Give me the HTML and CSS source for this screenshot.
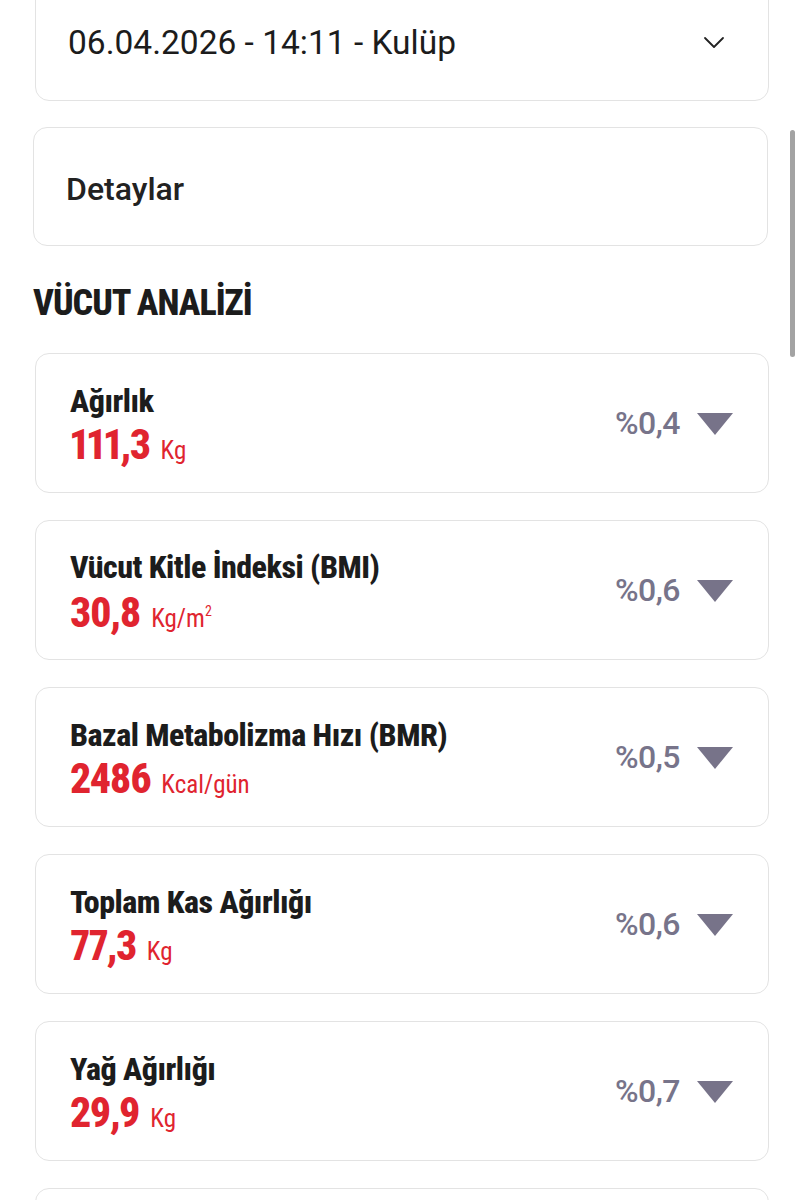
FILE: index.html
```html
<!DOCTYPE html>
<html lang="tr">
<head>
    <meta charset="UTF-8">
    <meta name="viewport" content="width=device-width, initial-scale=1.0">
    <title>Vücut Analizi</title>
    <link rel="stylesheet" href="styles.css">
</head>
<body>
    <div class="page">
        <div class="box select-box">
            <span class="select-text">06.04.2026 - 14:11 - Kulüp</span>
            <svg class="chevron" width="22" height="13" viewBox="0 0 22 13">
                <polyline points="2,2 11,11 20,2" fill="none" stroke="#222" stroke-width="1.8" stroke-linecap="round" stroke-linejoin="round"/>
            </svg>
        </div>

        <div class="box details-box">Detaylar</div>

        <h2 class="section-title">VÜCUT ANALİZİ</h2>

        <div class="metric-list">
            <div class="box metric">
                <div class="metric-info">
                    <div class="metric-name">Ağırlık</div>
                    <div class="metric-value">111,3 <span class="unit">Kg</span></div>
                </div>
                <div class="metric-change">
                    <span class="percent">%0,4</span>
                    <svg class="arrow" width="36" height="22" viewBox="0 0 36 22"><polygon points="0,0 36,0 18,22" fill="#777389"/></svg>
                </div>
            </div>
            <div class="box metric">
                <div class="metric-info">
                    <div class="metric-name">Vücut Kitle İndeksi (BMI)</div>
                    <div class="metric-value">30,8 <span class="unit">Kg/m<sup>2</sup></span></div>
                </div>
                <div class="metric-change">
                    <span class="percent">%0,6</span>
                    <svg class="arrow" width="36" height="22" viewBox="0 0 36 22"><polygon points="0,0 36,0 18,22" fill="#777389"/></svg>
                </div>
            </div>
            <div class="box metric">
                <div class="metric-info">
                    <div class="metric-name">Bazal Metabolizma Hızı (BMR)</div>
                    <div class="metric-value">2486 <span class="unit">Kcal/gün</span></div>
                </div>
                <div class="metric-change">
                    <span class="percent">%0,5</span>
                    <svg class="arrow" width="36" height="22" viewBox="0 0 36 22"><polygon points="0,0 36,0 18,22" fill="#777389"/></svg>
                </div>
            </div>
            <div class="box metric">
                <div class="metric-info">
                    <div class="metric-name">Toplam Kas Ağırlığı</div>
                    <div class="metric-value">77,3 <span class="unit">Kg</span></div>
                </div>
                <div class="metric-change">
                    <span class="percent">%0,6</span>
                    <svg class="arrow" width="36" height="22" viewBox="0 0 36 22"><polygon points="0,0 36,0 18,22" fill="#777389"/></svg>
                </div>
            </div>
            <div class="box metric">
                <div class="metric-info">
                    <div class="metric-name">Yağ Ağırlığı</div>
                    <div class="metric-value">29,9 <span class="unit">Kg</span></div>
                </div>
                <div class="metric-change">
                    <span class="percent">%0,7</span>
                    <svg class="arrow" width="36" height="22" viewBox="0 0 36 22"><polygon points="0,0 36,0 18,22" fill="#777389"/></svg>
                </div>
            </div>
            <div class="box metric"></div>
        </div>
    </div>

    <div class="scrollbar"></div>
</body>
</html>
```
FILE: styles.css
```css
body {
    margin: 0;
    background-color: #fff;
    font-family: Roboto, "Noto Sans", sans-serif;
    color: #1c1c1c;
    overflow: hidden;
}
.page {
    padding: 0 32px 0 35px;
}
.box {
    box-sizing: border-box;
    background-color: #fff;
    border: 1.5px solid #e3e3e3;
    border-radius: 14px;
}
.select-box {
    height: 119px;
    margin-top: -18px;
    padding: 0 43px 0 32px;
    display: flex;
    align-items: center;
    justify-content: space-between;
}
.select-text {
    font-size: 33.5px;
    padding-top: 2px;
}
.chevron {
    margin-top: 2px;
}
.details-box {
    height: 119px;
    margin: 26px 1px 0 -2px;
    padding: 4px 32px 0;
    display: flex;
    align-items: center;
    font-size: 32px;
    font-weight: 500;
    color: #222;
}
.section-title {
    margin: 37px 0 30px -2px;
    font-family: "Roboto Condensed", Roboto, sans-serif;
    font-stretch: condensed;
    font-weight: 800;
    font-size: 36px;
    line-height: 40px;
    letter-spacing: -1px;
}
.metric-list {
    display: flex;
    flex-direction: column;
    gap: 27px;
}
.metric {
    height: 140px;
    padding: 10px 35px 0 34px;
    display: flex;
    align-items: center;
    justify-content: space-between;
    font-family: "Roboto Condensed", Roboto, sans-serif;
    font-stretch: condensed;
}
.metric-name {
    font-size: 32px;
    line-height: 40px;
    font-weight: 800;
    letter-spacing: -0.5px;
}
.metric-value {
    margin-top: 0;
    font-size: 42px;
    line-height: 48px;
    font-weight: 800;
    color: #e0242f;
    letter-spacing: -1.6px;
    font-variant-numeric: proportional-nums;
}
.unit {
    margin-left: 3px;
    font-size: 25px;
    font-weight: 400;
    letter-spacing: 0;
}
.unit sup {
    font-size: 14px;
    vertical-align: 11px;
}
.metric-change {
    display: flex;
    align-items: center;
    gap: 17px;
    margin-top: -10px;
}
.percent {
    font-family: Roboto, sans-serif;
    font-stretch: normal;
    font-size: 32px;
    font-weight: 500;
    color: #77748a;
    letter-spacing: -0.5px;
}
.arrow {
    margin-top: 1px;
}
.scrollbar {
    position: fixed;
    top: 130px;
    right: 6px;
    width: 5px;
    height: 227px;
    border-radius: 3px;
    background-color: #a3a3a3;
}
```
